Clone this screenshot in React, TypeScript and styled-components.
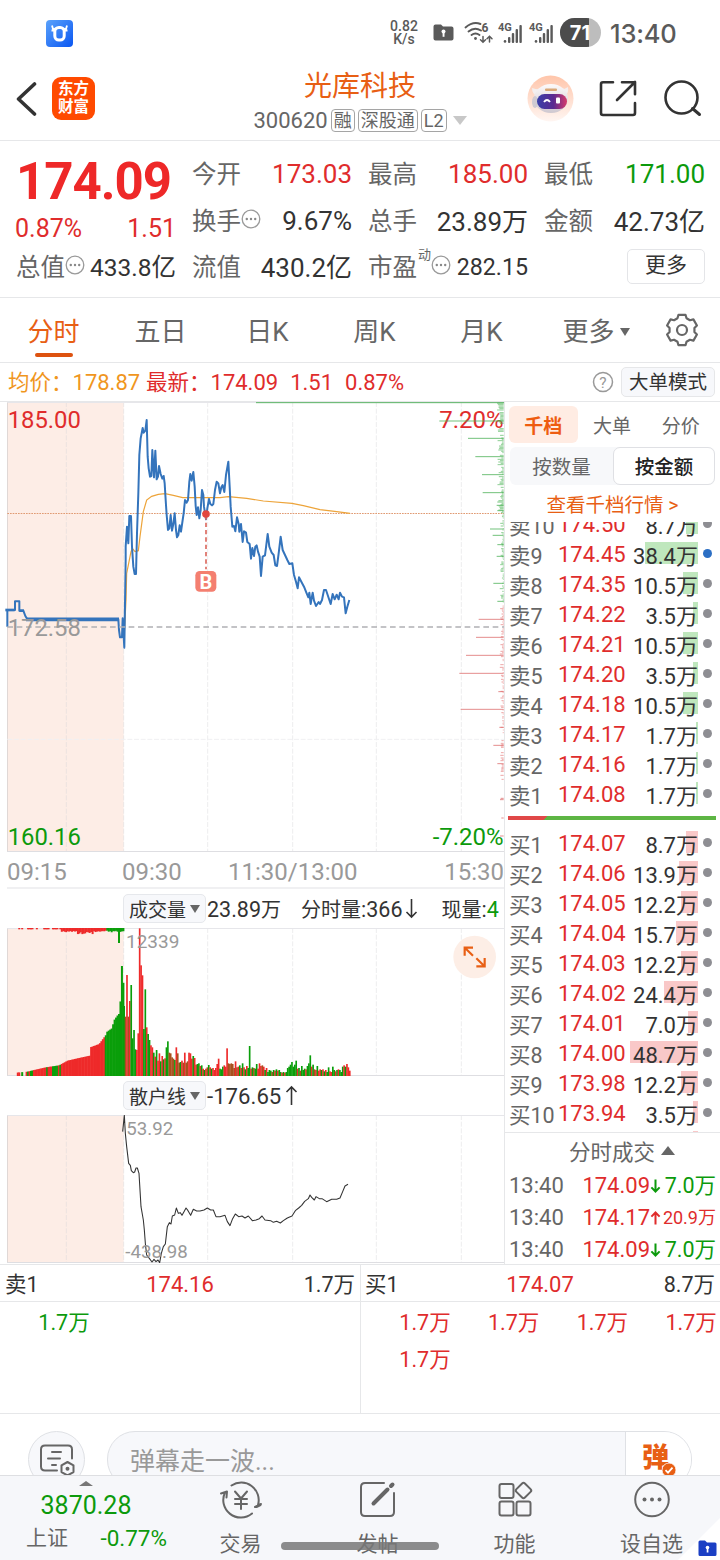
import React from 'react';
import styled, { createGlobalStyle } from 'styled-components';

const RED = '#e02c2c';
const GREEN = '#0c9a0c';
const ORANGE = '#e85f14';
const GREY = '#666';
const LINE = '#e6e7e9';

const Global = createGlobalStyle`
  * { box-sizing: border-box; }
  html, body { margin: 0; padding: 0; background: #fff; }
  body { font-family: Roboto, "Noto Sans CJK SC", sans-serif; color: #333; }
`;

const Page = styled.div`
  width: 720px;
  height: 1560px;
  overflow: hidden;
  display: flex;
  flex-direction: column;
  background: #fff;
`;

/* ---------- status bar ---------- */
const StatusBar = styled.div`
  height: 66px;
  padding: 0 43px 0 46px;
  display: flex;
  align-items: center;
  color: #5a5a5a;
`;
const AppBadge = styled.svg`
  display: block;
  margin-right: auto;
`;
const Speed = styled.div`
  width: 30px;
  text-align: center;
  font-size: 14px;
  line-height: 13px;
  font-weight: 500;
  margin-right: 14px;
`;
const StatusIcons = styled.svg`
  display: block;
`;
const Clock = styled.div`
  font-family: Inter, Roboto, sans-serif;
  font-size: 25.5px;
  line-height: 30px;
  padding-top: 2px;
  width: 67px;
  margin-left: 9px;
  font-weight: 500;
  letter-spacing: -0.2px;
`;

/* ---------- title bar ---------- */
const TitleBar = styled.header`
  height: 75px;
  border-bottom: 1px solid ${LINE};
  display: grid;
  grid-template-columns: 200px 320px 200px;
`;
const TitleLeft = styled.div`
  display: flex;
  align-items: flex-start;
  padding: 11px 0 0 16px;
  gap: 15px;
`;
const Brand = styled.div`
  width: 43px;
  height: 43px;
  border-radius: 9px;
  background: #ff4a00;
  color: #fff;
  font-weight: 700;
  font-size: 15.5px;
  line-height: 18px;
  text-align: center;
  padding-top: 3px;
`;
const TitleMid = styled.div`
  display: flex;
  flex-direction: column;
  align-items: center;
`;
const StockName = styled.div`
  font-size: 28px;
  line-height: 40px;
  height: 40px;
  padding-top: 1px;
  color: ${ORANGE};
`;
const StockMeta = styled.div`
  display: flex;
  align-items: center;
  height: 28px;
  font-size: 22px;
  color: ${GREY};
  gap: 3px;
`;
const Tag = styled.span`
  border: 1px solid #a5a5a5;
  border-radius: 4px;
  height: 23px;
  padding: 0 2px;
  font-size: 18px;
  line-height: 21px;
`;
const Caret = styled.span<{ $w: number; $h: number; $c?: string; $up?: boolean; $ml?: number }>`
  display: inline-block;
  width: 0;
  height: 0;
  margin-left: ${p => p.$ml ?? 0}px;
  border-left: ${p => p.$w / 2}px solid transparent;
  border-right: ${p => p.$w / 2}px solid transparent;
  ${p => (p.$up ? 'border-bottom' : 'border-top')}: ${p => p.$h}px solid ${p => p.$c ?? '#666'};
`;
const TitleRight = styled.div`
  display: flex;
  align-items: flex-start;
  padding-top: 9px;
  padding-left: 7px;
`;

/* ---------- quote ---------- */
const Quote = styled.section`
  height: 157px;
  border-bottom: 1px solid ${LINE};
  padding: 9px 15px 0 16px;
  display: grid;
  grid-template-columns: 160px 160px 160px 161px;
  column-gap: 16px;
  grid-template-rows: 47px 47px 46px;
`;
const BigCell = styled.div`
  grid-row: 1 / 3;
`;
const BigPrice = styled.div`
  height: 64px;
  line-height: 64px;
  font-size: 51px;
  font-weight: 700;
  color: #ee2828;
  letter-spacing: -1px;
`;
const Change = styled.div`
  display: flex;
  justify-content: space-between;
  font-size: 25px;
  line-height: 30px;
  color: ${RED};
  margin-left: -1px;
`;
const Cell = styled.div`
  display: flex;
  align-items: center;
  white-space: nowrap;
  font-size: 25px;
`;
const CellLabel = styled.span`
  color: ${GREY};
  font-size: 24.5px;
  padding-bottom: 3px;
`;
const CellValue = styled.span<{ $c?: string; $size?: number; $lift?: boolean }>`
  margin-left: auto;
  color: ${p => p.$c ?? '#333'};
  font-size: ${p => p.$size ?? 26}px;
  padding-bottom: ${p => (p.$lift ? 3 : 0)}px;
`;
const Sup = styled.span`
  font-size: 13px;
  color: ${GREY};
  align-self: flex-start;
  line-height: 18px;
  padding-top: 2px;
  margin-left: 1px;
`;
const Dots = styled.svg`
  display: block;
  flex: none;
  margin-bottom: 4px;
`;
const MoreButton = styled.div`
  margin-left: auto;
  width: 78px;
  height: 35px;
  border: 1px solid #e4e5e8;
  border-radius: 5px;
  font-size: 21px;
  line-height: 31px;
  text-align: center;
  margin-bottom: 2px;
`;

/* ---------- tabs ---------- */
const Tabs = styled.nav`
  height: 65px;
  border-bottom: 1px solid ${LINE};
  display: flex;
`;
const Tab = styled.div<{ $active?: boolean; $w?: number }>`
  width: ${p => p.$w ?? 107}px;
  display: flex;
  flex-direction: column;
  align-items: center;
  padding-top: 13px;
  font-size: 26px;
  line-height: 42px;
  white-space: nowrap;
  color: ${p => (p.$active ? ORANGE : GREY)};
  &::after {
    content: '';
    display: ${p => (p.$active ? 'block' : 'none')};
    width: 38px;
    height: 4px;
    border-radius: 2px;
    background: #dd5210;
  }
`;
const TabRow = styled.span`
  display: flex;
  align-items: center;
`;
const GearTab = styled.div`
  width: 49px;
  display: flex;
  justify-content: center;
  align-items: center;
`;

/* ---------- info ---------- */
const InfoRow = styled.div`
  height: 39px;
  border-bottom: 1px solid ${LINE};
  display: flex;
  align-items: center;
  padding: 0 5px 0 8px;
  font-size: 22px;
  white-space: nowrap;
  color: ${RED};
`;
const Avg = styled.span`
  color: #f0961e;
  width: 138px;
  display: flex;
  align-items: center;
`;
const InfoLabel = styled.span`
  font-size: 21.5px;
  padding-bottom: 3px;
`;
const InfoGap = styled.span`
  margin-left: 12px;
`;
const ModeButton = styled.div`
  width: 94px;
  height: 30px;
  margin-left: 7px;
  border: 1px solid ${LINE};
  border-radius: 5px;
  background: #f7f8fb;
  color: #333;
  font-size: 19.5px;
  line-height: 30px;
  text-align: center;
`;
const HelpIcon = styled.svg`
  display: block;
  margin-left: auto;
`;

/* ---------- main ---------- */
const Main = styled.main`
  height: 863px;
  display: flex;
  border-bottom: 1px solid ${LINE};
`;
const Charts = styled.div`
  width: 504px;
  display: flex;
  flex-direction: column;
`;
const Chart = styled.svg`
  display: block;
  flex: none;
  font-family: Roboto, sans-serif;
`;
const TimeAxis = styled.div`
  height: 37px;
  margin-left: 7px;
  border-bottom: 2px solid #f0f0f2;
  display: flex;
  font-size: 24px;
  line-height: 41px;
  color: #999;
`;
const Tick = styled.span<{ $w?: number }>`
  ${p => (p.$w ? `width: ${p.$w}px;` : 'margin-left: auto;')}
`;
const IndicatorHead = styled.div`
  height: 39px;
  padding-left: 123px;
  display: flex;
  align-items: center;
  font-size: 22px;
  white-space: nowrap;
`;
const Picker = styled.div`
  width: 83px;
  height: 29px;
  border: 1px solid #e6e8ec;
  border-radius: 5px;
  background: #f7f8fb;
  padding-left: 5px;
  display: flex;
  align-items: center;
  font-size: 19px;
`;
const HeadItem = styled.span<{ $ml?: number }>`
  margin-left: ${p => p.$ml ?? 0}px;
  font-size: 20px;
`;
const Num = styled.span<{ $c?: string; $size?: number; $mx?: number }>`
  color: ${p => p.$c ?? 'inherit'};
  font-size: ${p => p.$size ?? 21.5}px;
  margin: 0 ${p => p.$mx ?? 0}px;
`;
const ArrowIcon = styled.svg`
  display: block;
  margin-left: 3px;
`;

/* ---------- order book ---------- */
const Side = styled.aside`
  width: 216px;
  border-left: 1px solid ${LINE};
  display: flex;
  flex-direction: column;
`;
const BookTabs = styled.div`
  display: flex;
  margin: 4px 5px 0 4px;
`;
const BookTab = styled.div<{ $active?: boolean }>`
  flex: 1;
  height: 37px;
  border-radius: 6px;
  background: ${p => (p.$active ? '#ffece3' : 'transparent')};
  color: ${p => (p.$active ? '#ee5c10' : GREY)};
  font-weight: ${p => (p.$active ? 700 : 400)};
  font-size: 19px;
  line-height: 41px;
  text-align: center;
`;
const Segment = styled.div`
  margin: 4px 5px 0 5px;
  height: 38px;
  border-radius: 6px;
  background: #f7f8fa;
  display: flex;
`;
const SegmentItem = styled.div<{ $active?: boolean }>`
  width: ${p => (p.$active ? 102 : 103)}px;
  border-radius: 7px;
  border: 1px solid ${p => (p.$active ? '#dfe0e4' : 'transparent')};
  background: ${p => (p.$active ? '#fff' : 'transparent')};
  color: ${p => (p.$active ? '#222' : GREY)};
  font-weight: ${p => (p.$active ? 500 : 400)};
  font-size: 19.5px;
  line-height: 40px;
  text-align: center;
`;
const BookLink = styled.div`
  height: 37px;
  font-size: 19.5px;
  line-height: 42px;
  text-align: center;
  color: ${ORANGE};
`;
const BookClip = styled.div`
  height: 612px;
  overflow: hidden;
  border-bottom: 1px solid ${LINE};
`;
const BookList = styled.div`
  margin-top: -12px;
`;
const Level = styled.div`
  height: 30px;
  display: grid;
  grid-template-columns: 49px 72px 68px 1fr;
  padding-left: 4px;
  font-size: 22px;
  line-height: 34px;
  white-space: nowrap;
`;
const LevelName = styled.span`
  color: ${GREY};
  font-size: 21.5px;
`;
const LevelPrice = styled.span`
  color: ${RED};
  line-height: 30px;
`;
const LevelAmount = styled.span<{ $bar: number; $buy?: boolean }>`
  text-align: right;
  background: linear-gradient(${p => (p.$buy ? '#f9c8c8, #f9c8c8' : '#bfe7bd, #bfe7bd')}) right 2px / ${p => p.$bar}px 22px no-repeat;
`;
const LevelDot = styled.span<{ $c: string }>`
  width: 9px;
  height: 9px;
  border-radius: 50%;
  background: ${p => p.$c};
  margin: 9px 0 0 5px;
`;
const Ratio = styled.div`
  height: 4px;
  margin: 6px 4px 9px 3px;
  background: linear-gradient(135deg, #e04848 0 28px, #5db544 28px);
`;
const TradesTitle = styled.div`
  height: 35px;
  display: flex;
  align-items: center;
  justify-content: center;
  font-size: 21.5px;
  color: ${GREY};
  padding-left: 19px;
`;
const Trade = styled.div`
  height: 32px;
  display: grid;
  grid-template-columns: 1fr auto 66px;
  align-items: center;
  padding: 3px 4px 0 4px;
  font-size: 22px;
  line-height: 29px;
  color: ${GREY};
`;
const TradePrice = styled.span`
  color: ${RED};
`;
const TradeAmount = styled.span<{ $c: string; $size?: number }>`
  color: ${p => p.$c};
  height: 29px;
  display: flex;
  align-items: center;
  justify-content: space-between;
  font-size: ${p => p.$size ?? 21.5}px;
`;

/* ---------- queue ---------- */
const Queue = styled.section`
  height: 149px;
  display: grid;
  grid-template-columns: 360px 360px;
  border-bottom: 1px solid ${LINE};
`;
const QueueSide = styled.div<{ $right?: boolean }>`
  border-left: ${p => (p.$right ? `1px solid ${LINE}` : 'none')};
`;
const QueueHead = styled.div<{ $right?: boolean }>`
  height: 37px;
  padding: 0 5px 0 ${p => (p.$right ? 4 : 5)}px;
  border-bottom: 1px solid ${LINE};
  display: grid;
  grid-template-columns: 1fr 1fr 1fr;
  font-size: 21.5px;
  line-height: 40px;
  & > :nth-child(2) { text-align: center; color: ${RED}; font-size: 22px; }
  & > :nth-child(3) { text-align: right; }
`;
const QueueGrid = styled.div<{ $c: string }>`
  display: grid;
  grid-template-columns: repeat(4, 88.7px);
  grid-auto-rows: 37px;
  padding-left: 1px;
  line-height: 41px;
  font-size: 21.5px;
  text-align: right;
  color: ${p => p.$c};
`;

/* ---------- comment bar ---------- */
const CommentBar = styled.div`
  height: 61px;
  padding: 17px 28px 0 28px;
  display: flex;
  overflow: hidden;
`;
const RoundButton = styled.div`
  width: 57px;
  height: 57px;
  flex: none;
  border-radius: 50%;
  border: 1px solid #dfe1e5;
  background: #f7f8fb;
  margin-right: 22px;
`;
const CommentInput = styled.div`
  height: 57px;
  flex: 1;
  border: 1px solid #dfe1e5;
  border-radius: 28px;
  background: #f7f8fb;
  overflow: hidden;
  display: flex;
  font-size: 25px;
  line-height: 59px;
  color: #999;
  padding-left: 22px;
`;
const Danmu = styled.div`
  margin-left: auto;
  width: 66px;
  border-left: 1px solid #dfe1e5;
  background: #fff;
  color: ${ORANGE};
  font-size: 27px;
  font-weight: 900;
  line-height: 53px;
  padding-left: 16px;
  display: flex;
`;
const CheckMark = styled.svg`
  flex: none;
  margin: 31px 0 0 -7px;
`;

/* ---------- bottom navigation ---------- */
const BottomNav = styled.nav`
  position: relative;
  height: 85px;
  background: #f6f7fa;
  border-top: 1px solid #dedfe2;
  display: grid;
  grid-template-columns: 172px repeat(4, 137px);
  color: ${GREY};
`;
const IndexBox = styled.div`
  display: flex;
  flex-direction: column;
  align-items: center;
  padding-top: 5px;
`;
const IndexValue = styled.div`
  font-size: 25px;
  line-height: 40px;
  color: ${GREEN};
`;
const IndexRow = styled.div`
  width: 100%;
  padding: 0 5px 0 26px;
  display: flex;
  justify-content: space-between;
  align-items: center;
  font-size: 21px;
  line-height: 25px;
`;
const NavItem = styled.div`
  display: flex;
  flex-direction: column;
  align-items: center;
  padding-top: 3px;
  font-size: 21px;
  line-height: 30px;
  & > svg { margin-bottom: 8px; }
`;
const HomeIndicator = styled.div`
  position: absolute;
  left: 281px;
  top: 66px;
  width: 158px;
  height: 8px;
  border-radius: 4px;
  background: rgba(120, 120, 120, 0.85);
`;
const Corner = styled.svg`
  position: absolute;
  right: 0;
  bottom: 0;
`;

/* ---------- data ---------- */
type Row = [string, string, number];
const asks: Row[] = [
  ['卖10', '174.50', 8.7], ['卖9', '174.45', 38.4], ['卖8', '174.35', 10.5], ['卖7', '174.22', 3.5],
  ['卖6', '174.21', 10.5], ['卖5', '174.20', 3.5], ['卖4', '174.18', 10.5], ['卖3', '174.17', 1.7],
  ['卖2', '174.16', 1.7], ['卖1', '174.08', 1.7],
];
const bids: Row[] = [
  ['买1', '174.07', 8.7], ['买2', '174.06', 13.9], ['买3', '174.05', 12.2], ['买4', '174.04', 15.7],
  ['买5', '174.03', 12.2], ['买6', '174.02', 24.4], ['买7', '174.01', 7.0], ['买8', '174.00', 48.7],
  ['买9', '173.98', 12.2], ['买10', '173.94', 3.5],
];

const pricePoints =
  '22,680 22,630 45,630 45,604 58,604 58,632 70,632 76,648 82,658 355,658 357,690 360,712 366,712 368,655 373,743 377,480 377,440 381,380 385,430 388,348 393,348 396,440 400,500 404,522 408,522 411,400 415,280 418,165 422,115 428,84 431,98 436,92 440,60 443,170 446,205 450,230 454,228 457,150 462,232 466,152 470,238 474,230 477,198 482,222 487,236 491,228 494,250 497,300 500,345 504,390 508,385 512,345 516,392 520,372 524,340 528,390 531,412 535,405 539,376 543,395 548,360 551,340 555,300 560,308 564,300 568,245 571,222 575,242 580,216 584,260 587,318 590,345 594,322 598,355 602,330 606,270 610,285 612,320 618,358 622,325 627,297 631,312 636,316 640,312 645,270 650,245 655,250 660,280 664,262 668,255 673,276 678,225 685,185 689,260 692,320 697,380 702,378 706,394 711,352 716,372 718,395 723,372 728,426 732,394 738,398 742,426 749,432 753,476 757,444 762,468 766,440 770,436 774,455 779,470 783,528 788,470 795,466 803,402 808,440 815,458 821,465 826,496 831,498 836,460 842,410 848,450 855,465 862,480 868,492 877,490 882,525 888,545 893,565 897,532 904,545 912,560 920,580 925,592 928,578 932,612 938,578 942,602 948,618 956,606 960,612 966,600 972,570 978,570 984,588 992,612 998,582 1004,598 1010,584 1016,598 1020,578 1026,590 1032,592 1037,640 1042,620 1048,600';
const avgPoints =
  '373,700 378,600 380,520 386,490 393,455 397,445 405,455 415,452 420,410 430,335 440,300 455,289 475,283 495,281 520,286 548,293 600,293 660,293 685,290 740,295 790,303 876,310 910,317 960,329 1010,335 1050,340';
const retailPoints =
  '368,155 373,106 376,160 380,200 386,250 391,256 394,272 400,278 404,276 408,264 412,264 417,280 420,330 423,380 430,420 433,450 436,490 440,525 448,535 456,546 462,538 468,545 474,540 479,548 484,520 490,500 496,492 502,440 508,428 513,432 517,408 524,405 529,384 535,400 541,398 546,406 552,395 558,384 564,392 572,406 580,388 590,393 600,393 612,390 622,384 632,390 640,390 648,410 660,410 675,406 682,425 690,437 697,418 706,402 716,410 726,408 735,414 745,408 757,422 768,420 778,416 786,408 795,420 812,422 820,427 830,424 841,429 850,422 862,414 876,408 886,392 896,384 905,376 914,364 925,356 930,345 935,352 943,360 948,350 958,356 966,356 980,365 995,358 1010,358 1020,354 1028,335 1035,318 1044,313';

/* distribution of resting orders along the right edge: [y, start x] */
const askSpikes = [[63, 1318], [115, 1404], [170, 1426], [224, 1446], [278, 1448], [306, 1492], [316, 1490], [332, 1492], [387, 1470], [406, 1478], [434, 1492], [469, 1490], [550, 1480], [604, 1492]];
const bidSpikes = [[658, 1436], [712, 1428], [766, 1398], [820, 1378], [875, 1495], [928, 1382], [982, 1498], [1036, 1480], [1091, 1492], [1195, 1502], [1199, 1500], [1254, 1504], [1308, 1500]];
const gridX = [199, 371, 623, 878, 1129, 1384];
const noise = (i: number) => {
  const v = Math.sin(i * 12.9898) * 43758.5453;
  return v - Math.floor(v);
};

const R = '#ee2a2a';
const G = '#0a9e0a';
const B = '#a8501e';
const tone: Record<string, string> = { r: R, g: G, b: B };
/* volume per minute after the open: colour and bar top */
const volumes =
  'g558 b590 r465 b590 r543 g495 g655 g630 g688 r690 r640 r325 r436 r466 g627 g508 r622 g642 g660 r676 r682 g698 r710 g690 r722 r700 g724 r708 g718 r715 g682 g664 b698 b700 b712 b716 g720 r682 b700 b728 g726 r722 b728 r698 b728 b724 r698 r700 r716 g708 r714 r734 g732 g730 r738 g736 r746 g750 r746 b742 g735 r742 g746 r744 r750 r744 r732 r716 g746 g748 g740 r736 r740 r685 b730 b732 b730 b732 b744 r724 b742 r740 g736 r744 g730 r742 g748 r738 g744 g678 r746 g742 b744 g746 g732 r746 r730 r738 b736 r740 g750 r744 g756 g750 g752 b756 g750 r752 g748 r752 g750 g756 r758 g756 r758 g756 g744 g740 g734 g726 g740 g734 g722 r746 g744 b752 g738 g750 g746 r748 g738 g730 g706 r740 g734 b748 r750 g738 r752 r748 g750 r748 g754 r750 g756 g742 r754 r756 g740 g750 r754 g750 r748 g750 g756 g740 r736 g740 r732 r742 r752';

function Grid({ top, bottom }: { top: number; bottom: number }) {
  return (
    <>
      <rect x="22" y={top} width="349" height={bottom - top} fill="#fdede6" />
      {gridX.map(x => (
        <line key={x} x1={x} x2={x} y1={top} y2={bottom} stroke="#d4d4d8" strokeOpacity="0.42" strokeWidth="3" strokeDasharray="15 5" />
      ))}
      <line x1="22.5" x2="22.5" y1={top} y2={bottom} stroke="#e0d8d6" strokeWidth="3" />
      <line x1="22" x2="1512" y1={top + 1.5} y2={top + 1.5} stroke="#e6e6ea" strokeWidth="3" />
      <line x1="22" x2="1512" y1={bottom - 1.5} y2={bottom - 1.5} stroke="#dedee2" strokeWidth="3" />
    </>
  );
}

function PriceChart() {
  const ticks = [];
  for (let y = 10; y < 1140; y += 4) {
    const n = noise(y);
    if (y > 1000 && n < 0.6) continue;
    if (n < 0.25) continue;
    const len = y < 110 ? 6 + n * 14 : y < 340 ? 3 + n * n * 16 : 2 + n * n * n * 10;
    ticks.push(<line key={y} x1={1511 - len} x2={1511} y1={y} y2={y} stroke={y < 610 ? '#3fae4b' : '#e06a6a'} strokeWidth="2.4" strokeOpacity="0.75" />);
  }
  return (
    <Chart width="504" height="450" viewBox="0 6 1512 1350">
      <Grid top={6} bottom={1356} />
      <line x1="22" x2="1512" y1="1018" y2="1018" stroke="#f0f0f2" strokeWidth="3" strokeDasharray="15 5" />
      <line x1="22" x2="1512" y1="340.500" y2="340.500" stroke="#e09a72" strokeWidth="3" strokeDasharray="5 3" />
      <text x="23" y="84" fontSize="71.500" fill={RED}>185.00</text>
      <text x="1511" y="84" fontSize="72" fill={RED} textAnchor="end">7.20%</text>
      <text x="23" y="1335" fontSize="71.500" fill={GREEN}>160.16</text>
      <text x="1511" y="1334" fontSize="72" fill={GREEN} textAnchor="end">-7.20%</text>
      <line x1="768" x2="1512" y1="8" y2="8" stroke="#5cb565" strokeWidth="3" />
      {askSpikes.map(([y, x]) => <line key={y} x1={x} x2={1511} y1={y} y2={y} stroke="#4fb35a" strokeWidth="3" strokeOpacity="0.8" />)}
      {bidSpikes.map(([y, x]) => <line key={y} x1={x} x2={1511} y1={y} y2={y} stroke="#dd7070" strokeWidth="3" strokeOpacity="0.8" />)}
      {ticks}
      <polyline points={avgPoints} fill="none" stroke="#eda43a" strokeWidth="3.600" />
      <polyline points={pricePoints} fill="none" stroke="#3474bc" strokeWidth="6" strokeLinejoin="round" />
      <line x1="16" x2="44" y1="630" y2="630" stroke="#3474bc" strokeWidth="8" />
      <line x1="58" x2="72" y1="632" y2="632" stroke="#3474bc" strokeWidth="8" />
      <line x1="78" x2="357" y1="658" y2="658" stroke="#3474bc" strokeWidth="11" />
      <line x1="22" x2="1512" y1="681" y2="681" stroke="#b0b0b4" strokeWidth="4.500" strokeDasharray="17 11" />
      <text x="23" y="709" fontSize="71.500" fill="#999">172.58</text>
      <line x1="618" x2="618" y1="346" y2="508" stroke="#dc6a60" strokeWidth="5" strokeDasharray="13 9" />
      <circle cx="618" cy="342" r="11.500" fill="#e2463f" />
      <rect x="586" y="513" width="63" height="62" rx="13" fill="#f47f70" />
      <text x="618" y="566" fontSize="60" fontWeight="700" fill="#fff" textAnchor="middle">B</text>
    </Chart>
  );
}

function VolumeChart() {
  const pre = [];
  const env: [number, number][] = [[22, 760], [80, 755], [100, 750], [135, 742], [175, 736], [200, 722], [230, 715], [267, 707], [268, 682], [295, 672], [315, 645], [316, 637], [333, 625], [340, 600], [350, 586], [356, 580], [357, 545], [361, 543], [362, 438], [367, 438], [368, 690]];
  for (let x = 24; x < 369; x += 4.4) {
    let k = 0;
    while (k < env.length - 2 && env[k + 1][0] < x) k++;
    const [x0, y0] = env[k];
    const [x1, y1] = env[k + 1];
    const y = y0 + ((y1 - y0) * (x - x0)) / (x1 - x0 || 1);
    const n = noise(x);
    if (x < 75 && n < 0.4) continue;
    const c = x > 314 ? G : x < 182 ? (n > 0.7 ? G : R) : R;
    pre.push(<rect key={x} x={x} y={y} width="6" height={768 - y} fill={c} />);
    if (x > 182 || n > 0.55) {
      const d = x < 182 ? 4 : x > 350 && x < 356 ? 45 : 8 + (x > 225 && x < 275 ? 11 : 5) * noise(x + 3);
      pre.push(<rect key={`t${x}`} x={x} y={324} width="6" height={d} fill={x > 316 ? G : R} />);
    }
  }
  return (
    <Chart width="504" height="148" viewBox="0 324 1512 444">
      <Grid top={324} bottom={768} />
      {pre}
      {volumes.split(' ').map((v, i) => {
        const y = Number(v.slice(1));
        return <rect key={i} x={370 + i * 4.23} y={y} width="5" height={768 - y} fill={tone[v[0]]} />;
      })}
      <text x="378" y="385" fontSize="57" fill="#999">12339</text>
      <circle cx="1424" cy="411" r="64" fill="#fdeee6" />
      <g fill="none" stroke={ORANGE} strokeWidth="6.500">
        <path d="M1394 408v-24h25M1396 386l23 22M1454 415v25h-25M1452 438l-23-22" transform="translate(0 -1)" />
      </g>
    </Chart>
  );
}

function RetailChart() {
  return (
    <Chart width="504" height="148" viewBox="0 105 1512 444">
      <Grid top={105} bottom={549} />
      <polyline points={retailPoints} fill="none" stroke="#333" strokeWidth="3.200" strokeLinejoin="round" />
      <text x="379" y="166" fontSize="56" fill="#999">53.92</text>
      <text x="376" y="534" fontSize="56" fill="#999">-438.98</text>
    </Chart>
  );
}

function MoreDots() {
  return (
    <Dots width="20" height="20" viewBox="0 0 20 20">
      <circle cx="10" cy="10" r="8.800" fill="none" stroke="#9a9a9a" strokeWidth="1.300" />
      {[5.8, 10, 14.2].map(x => <circle key={x} cx={x} cy="10" r="1.200" fill="#888" />)}
    </Dots>
  );
}

function Gear() {
  const pts: string[] = [];
  for (let k = 0; k < 6; k++) {
    const a = k * 60 - 90;
    [[-21, 12.6], [-13, 15.6], [13, 15.6], [21, 12.6]].forEach(([d, r]) => {
      const t = ((a + d) * Math.PI) / 180;
      pts.push(`${(17 + r * Math.cos(t)).toFixed(2)},${(17 + r * Math.sin(t)).toFixed(2)}`);
    });
  }
  return (
    <svg width="34" height="34" viewBox="0 0 34 34" fill="none" stroke="#666" strokeWidth="2.200" strokeLinejoin="round">
      <polygon points={pts.join(' ')} />
      <circle cx="17" cy="17" r="5" />
    </svg>
  );
}

function Signal() {
  return (
    <g fill="#5a5a5a">
      <circle cx="7" cy="27.400" r="1.300" />
      <rect x="10" y="23" width="2.400" height="6" rx="1" />
      <rect x="13.800" y="19" width="2.400" height="10" rx="1" />
      <rect x="17.600" y="15" width="2.400" height="14" rx="1" />
      <rect x="21.400" y="11" width="2.400" height="18" rx="1" />
      <text x="0" y="16.500" fontSize="11" fontWeight="700" fontFamily="Roboto">4G</text>
    </g>
  );
}

function BookLevel({ row, buy }: { row: Row; buy?: boolean }) {
  return (
    <Level>
      <LevelName>{row[0]}</LevelName>
      <LevelPrice>{row[1]}</LevelPrice>
      <LevelAmount $bar={Math.round(row[2] * 1.39)} $buy={buy}>{row[2].toFixed(1)}万</LevelAmount>
      <LevelDot $c={row[0] === '卖9' ? '#2c6fc4' : '#8e8e93'} />
    </Level>
  );
}

function TradeArrow({ up }: { up?: boolean }) {
  return (
    <svg width="11" height="16" viewBox="0 0 12 16" fill="none" stroke="currentColor" strokeWidth="2.200">
      <path d={up ? 'M6 15V2M1.5 6.5 6 2l4.5 4.5' : 'M6 1v13M1.5 9.5 6 14l4.5-4.5'} />
    </svg>
  );
}

function HeadArrow({ up }: { up?: boolean }) {
  return (
    <ArrowIcon width="13" height="22" viewBox="0 0 13 22" fill="none" stroke="#333" strokeWidth="1.600">
      <path d={up ? 'M6.500 20V2M1.500 7l5-5 5 5' : 'M6.500 1v18M1.500 14l5 5 5-5'} />
    </ArrowIcon>
  );
}

export default function App() {
  return (
    <>
      <Global />
      <Page>
        <StatusBar>
          <AppBadge width="27" height="27" viewBox="0 0 27 27">
            <defs>
              <linearGradient id="badge" x1="0" y1="0" x2="1" y2="1">
                <stop offset="0" stopColor="#5ba2fb" />
                <stop offset="1" stopColor="#0a56f2" />
              </linearGradient>
            </defs>
            <rect width="27" height="27" rx="4" fill="url(#badge)" />
            <rect x="8.800" y="7.500" width="9.400" height="12.500" rx="4" fill="none" stroke="#fff" strokeWidth="3" />
            <path d="M6 5.500 7 9h3M21 5.500 20 9h-3M5.500 10.500h3M18.500 10.500h3" fill="none" stroke="#fff" strokeWidth="1.800" />
          </AppBadge>
          <Speed>0.82<br />K/s</Speed>
          <StatusIcons width="168" height="40" viewBox="433 14 168 40">
            <path d="M433.500 27.500q0-2 2-2h5.500l2 2h8.500q2 0 2 2v10q0 2-2 2h-16q-2 0-2-2z" fill="#5a5a5a" />
            <circle cx="443.500" cy="32.500" r="2" fill="#fff" /><rect x="442.600" y="33" width="1.900" height="4.800" fill="#fff" />
            <g fill="none" stroke="#5a5a5a" strokeWidth="1.900" strokeLinecap="round">
              <path d="M465.500 28.500q7.500-6.500 15-3.500M468.500 32.500q6-5 12.500-1M471.500 36q4-3 8 0" />
              <path d="M483 37.500v5.500m-2.500-2.300 2.500 2.500 2.500-2.500M489.500 43v-5.500m-2.500 2.300 2.500-2.500 2.500 2.500" strokeWidth="1.500" />
            </g>
            <circle cx="475.500" cy="39.500" r="1.400" fill="#5a5a5a" />
            <text x="481.500" y="33" fontSize="12" fontWeight="700" fontFamily="Roboto" fill="#5a5a5a">6</text>
            <g transform="translate(498 15)"><Signal /></g>
            <g transform="translate(529 15)"><Signal /></g>
            <clipPath id="bat"><rect x="560" y="19" width="41" height="29" rx="14.500" /></clipPath>
            <g clipPath="url(#bat)">
              <rect x="560" y="19" width="41" height="29" fill="#bdbdbd" />
              <rect x="560" y="19" width="29" height="29" fill="#4c4c4c" />
            </g>
            <text x="580" y="40.500" fontSize="20" fontWeight="700" fontFamily="Inter" fill="#fff" textAnchor="middle">71</text>
          </StatusIcons>
          <Clock>13:40</Clock>
        </StatusBar>

        <TitleBar>
          <TitleLeft>
            <svg width="21" height="42" viewBox="0 0 21 42" fill="none" stroke="#333" strokeWidth="3.600" strokeLinecap="round" strokeLinejoin="round">
              <path d="M18.500 7 2.500 22l16 15" />
            </svg>
            <Brand>东方<br />财富</Brand>
          </TitleLeft>
          <TitleMid>
            <StockName>光库科技</StockName>
            <StockMeta>
              300620<Tag>融</Tag><Tag>深股通</Tag><Tag>L2</Tag><Caret $w={14} $h={9} $c="#c8c8c8" $ml={3} />
            </StockMeta>
          </TitleMid>
          <TitleRight>
            <svg width="185" height="50" viewBox="527 75 185 50" fill="none">
              <defs>
                <linearGradient id="halo" x1="0" y1="0" x2="0" y2="1">
                  <stop offset="0" stopColor="#ffc5aa" />
                  <stop offset="1" stopColor="#fff6f2" />
                </linearGradient>
                <linearGradient id="visor">
                  <stop offset="0" stopColor="#3a3fa8" />
                  <stop offset="0.550" stopColor="#5a2a90" />
                  <stop offset="1" stopColor="#d83a6a" />
                </linearGradient>
                <linearGradient id="shell" x1="0" y1="0" x2="0" y2="1">
                  <stop offset="0" stopColor="#fdfafa" />
                  <stop offset="1" stopColor="#cfc8d0" />
                </linearGradient>
              </defs>
              <circle cx="550.500" cy="98.500" r="23" fill="url(#halo)" />
              <path d="M532 88q0 6 5 8l6-7q-6 1-11-1zM568 87q1 6-3 9l-7-7q6 1 10-2z" fill="#f4efef" />
              <ellipse cx="551" cy="98.500" rx="17" ry="14.500" fill="url(#shell)" />
              <ellipse cx="535" cy="102" rx="3" ry="6" fill="#cfcad2" />
              <rect x="545" y="88.500" width="12" height="2.500" rx="1" fill="#d9a878" />
              <rect x="537" y="94" width="30" height="15" rx="7.500" fill="url(#visor)" />
              <path d="M544 102q3-4 6 0" stroke="#fff" strokeWidth="1.800" />
              <rect x="556" y="97.500" width="4" height="6" rx="1" fill="#fff" />
              <g stroke="#333" strokeWidth="2.600" strokeLinecap="round" strokeLinejoin="round">
                <path d="M613 82.300h-10q-2 0-2 2V113q0 2 2 2h30q2 0 2-2v-10M617 100l18-18M622 82.300h13v12" />
                <circle cx="681.500" cy="97.500" r="16" />
                <path d="M692.500 108.500l7 6" strokeWidth="3" />
              </g>
            </svg>
          </TitleRight>
        </TitleBar>

        <Quote>
          <BigCell>
            <BigPrice>174.09</BigPrice>
            <Change><span>0.87%</span><span>1.51</span></Change>
          </BigCell>
          <Cell><CellLabel>今开</CellLabel><CellValue $c={RED}>173.03</CellValue></Cell>
          <Cell><CellLabel>最高</CellLabel><CellValue $c={RED}>185.00</CellValue></Cell>
          <Cell><CellLabel>最低</CellLabel><CellValue $c={GREEN}>171.00</CellValue></Cell>
          <Cell><CellLabel>换手</CellLabel><MoreDots /><CellValue>9.67%</CellValue></Cell>
          <Cell><CellLabel>总手</CellLabel><CellValue $lift>23.89万</CellValue></Cell>
          <Cell><CellLabel>金额</CellLabel><CellValue $lift>42.73亿</CellValue></Cell>
          <Cell><CellLabel>总值</CellLabel><MoreDots /><CellValue $size={24.5} $lift>433.8亿</CellValue></Cell>
          <Cell><CellLabel>流值</CellLabel><CellValue $lift>430.2亿</CellValue></Cell>
          <Cell><CellLabel>市盈</CellLabel><Sup>动</Sup><MoreDots /><CellValue $size={23.2}>282.15</CellValue></Cell>
          <Cell><MoreButton>更多</MoreButton></Cell>
        </Quote>

        <Tabs>
          <Tab $active>分时</Tab>
          <Tab>五日</Tab>
          <Tab>日K</Tab>
          <Tab>周K</Tab>
          <Tab>月K</Tab>
          <Tab $w={122}><TabRow>更多<Caret $w={10} $h={8} $ml={5} /></TabRow></Tab>
          <GearTab><Gear /></GearTab>
        </Tabs>

        <InfoRow>
          <Avg><InfoLabel>均价：</InfoLabel>178.87</Avg>
          <InfoLabel>最新：</InfoLabel>174.09<InfoGap>1.51</InfoGap><InfoGap>0.87%</InfoGap>
          <HelpIcon width="22" height="22" viewBox="0 0 22 22">
            <circle cx="11" cy="11" r="9.500" fill="none" stroke="#999" strokeWidth="1.500" />
            <text x="11" y="16.500" fontSize="15.500" fill="#999" textAnchor="middle" fontFamily="Roboto">?</text>
          </HelpIcon>
          <ModeButton>大单模式</ModeButton>
        </InfoRow>

        <Main>
          <Charts>
            <PriceChart />
            <TimeAxis><Tick $w={115}>09:15</Tick><Tick $w={106}>09:30</Tick><Tick $w={140}>11:30/13:00</Tick><Tick>15:30</Tick></TimeAxis>
            <IndicatorHead>
              <Picker>成交量<Caret $w={10} $h={8} $ml={4} /></Picker>
              <HeadItem $ml={1}><Num>23.89</Num>万</HeadItem>
              <HeadItem $ml={20}>分时量<Num>:366</Num></HeadItem><HeadArrow />
              <HeadItem $ml={23}>现量<Num>:</Num><Num $c={GREEN}>4</Num></HeadItem>
            </IndicatorHead>
            <VolumeChart />
            <IndicatorHead>
              <Picker>散户线<Caret $w={10} $h={8} $ml={4} /></Picker>
              <Num $size={22.2} $mx={1}>-176.65</Num><HeadArrow up />
            </IndicatorHead>
            <RetailChart />
          </Charts>
          <Side>
            <BookTabs><BookTab $active>千档</BookTab><BookTab>大单</BookTab><BookTab>分价</BookTab></BookTabs>
            <Segment><SegmentItem>按数量</SegmentItem><SegmentItem $active>按金额</SegmentItem></Segment>
            <BookLink>查看千档行情 &gt;</BookLink>
            <BookClip>
              <BookList>
                {asks.map(r => <BookLevel key={r[0]} row={r} />)}
                <Ratio />
                {bids.map(r => <BookLevel key={r[0]} row={r} buy />)}
                <Level><span /><span /><LevelAmount $bar={5} $buy /></Level>
              </BookList>
            </BookClip>
            <TradesTitle>分时成交<Caret $w={14} $h={9} $up $ml={6} /></TradesTitle>
            <Trade>13:40<TradePrice>174.09</TradePrice><TradeAmount $c={GREEN}><TradeArrow />7.0万</TradeAmount></Trade>
            <Trade>13:40<TradePrice>174.17</TradePrice><TradeAmount $c={RED} $size={18}><TradeArrow up />20.9万</TradeAmount></Trade>
            <Trade>13:40<TradePrice>174.09</TradePrice><TradeAmount $c={GREEN}><TradeArrow />7.0万</TradeAmount></Trade>
          </Side>
        </Main>

        <Queue>
          <QueueSide>
            <QueueHead><span>卖1</span><span>174.16</span><span>1.7万</span></QueueHead>
            <QueueGrid $c={GREEN}><span>1.7万</span></QueueGrid>
          </QueueSide>
          <QueueSide $right>
            <QueueHead $right><span>买1</span><span>174.07</span><span>8.7万</span></QueueHead>
            <QueueGrid $c={RED}><span>1.7万</span><span>1.7万</span><span>1.7万</span><span>1.7万</span><span>1.7万</span></QueueGrid>
          </QueueSide>
        </Queue>

        <CommentBar>
          <RoundButton>
            <svg width="55" height="55" viewBox="29 1432 55 55" fill="none" stroke="#666" strokeWidth="2" strokeLinecap="round" strokeLinejoin="round">
              <path d="M57 1470.500H45q-4 0-4-4v-17q0-4 4-4h23q4 0 4 4v9M52 1452h9M48 1458.500h12M52 1465h4" />
              <path d="M67.500 1462l6 3.300v6.800l-6 3.300-6-3.300v-6.800z" />
              <circle cx="67.500" cy="1468.700" r="1" />
            </svg>
          </RoundButton>
          <CommentInput>
            弹幕走一波...
            <Danmu>弹
              <CheckMark width="14" height="14" viewBox="0 0 14 14">
                <circle cx="7" cy="7" r="7" fill={ORANGE} stroke="#fff" strokeWidth="0.800" />
                <path d="M3.500 7.200 6 9.700l4.500-5" fill="none" stroke="#fff" strokeWidth="1.800" />
              </CheckMark>
            </Danmu>
          </CommentInput>
        </CommentBar>

        <BottomNav>
          <IndexBox>
            <Caret $w={14} $h={5} $up $c="#777" />
            <IndexValue>3870.28</IndexValue>
            <IndexRow><span>上证</span><Num $c={GREEN} $size={22.5}>-0.77%</Num></IndexRow>
          </IndexBox>
          <NavItem>
            <svg width="42" height="42" viewBox="0 0 42 42" fill="none" stroke="#666" strokeWidth="2" strokeLinecap="round" strokeLinejoin="round">
              <path d="M11.500 6.500A17.500 17.500 0 0 1 38 26M32 34.500A17.500 17.500 0 0 1 5 13.500M1 14.500l6-2-.5 6M35 28l6-3M36.500 28l4-2" />
              <path d="M15 12.500l6 7 6-7M21 19.500V30M15 20h12M15 25h12" />
            </svg>
            交易
          </NavItem>
          <NavItem>
            <svg width="42" height="42" viewBox="0 0 42 42" fill="none" stroke="#666" strokeWidth="2" strokeLinecap="round" strokeLinejoin="round">
              <path d="M27 4H8q-4 0-4 4v25q0 4 4 4h25q4 0 4-4V14" />
              <path d="M16.500 24.500 30.500 10.500M34 7l1.500-1.500" strokeWidth="4" />
            </svg>
            发帖
          </NavItem>
          <NavItem>
            <svg width="42" height="42" viewBox="0 0 42 42" fill="none" stroke="#666" strokeWidth="2">
              <rect x="5.500" y="5" width="14" height="14" rx="2" />
              <rect x="5.500" y="22.500" width="14" height="14" rx="2" />
              <rect x="22.500" y="22.500" width="14" height="14" rx="2" />
              <rect x="23.500" y="5.500" width="12" height="12" rx="2" transform="rotate(45 29.500 11.500)" />
            </svg>
            功能
          </NavItem>
          <NavItem>
            <svg width="42" height="42" viewBox="0 0 42 42" fill="#666">
              <circle cx="21" cy="20.500" r="16.800" fill="none" stroke="#666" strokeWidth="2" />
              <circle cx="13.500" cy="20.500" r="2" /><circle cx="21" cy="20.500" r="2" /><circle cx="28.500" cy="20.500" r="2" />
            </svg>
            设自选
          </NavItem>
          <HomeIndicator />
          <Corner width="42" height="42" viewBox="0 0 42 42">
            <path d="M42 0v42H0z" fill="#fff" />
            <path d="M20.500 24q0-1.500 1.500-1.500h5l2 2h8q1.500 0 1.500 1.500v10.500q0 1.500-1.500 1.500H22q-1.500 0-1.500-1.500z" fill="#1b3fc4" />
            <circle cx="29.500" cy="29.500" r="1.800" fill="#fff" /><rect x="28.700" y="30" width="1.700" height="4.500" fill="#fff" />
          </Corner>
        </BottomNav>
      </Page>
    </>
  );
}
